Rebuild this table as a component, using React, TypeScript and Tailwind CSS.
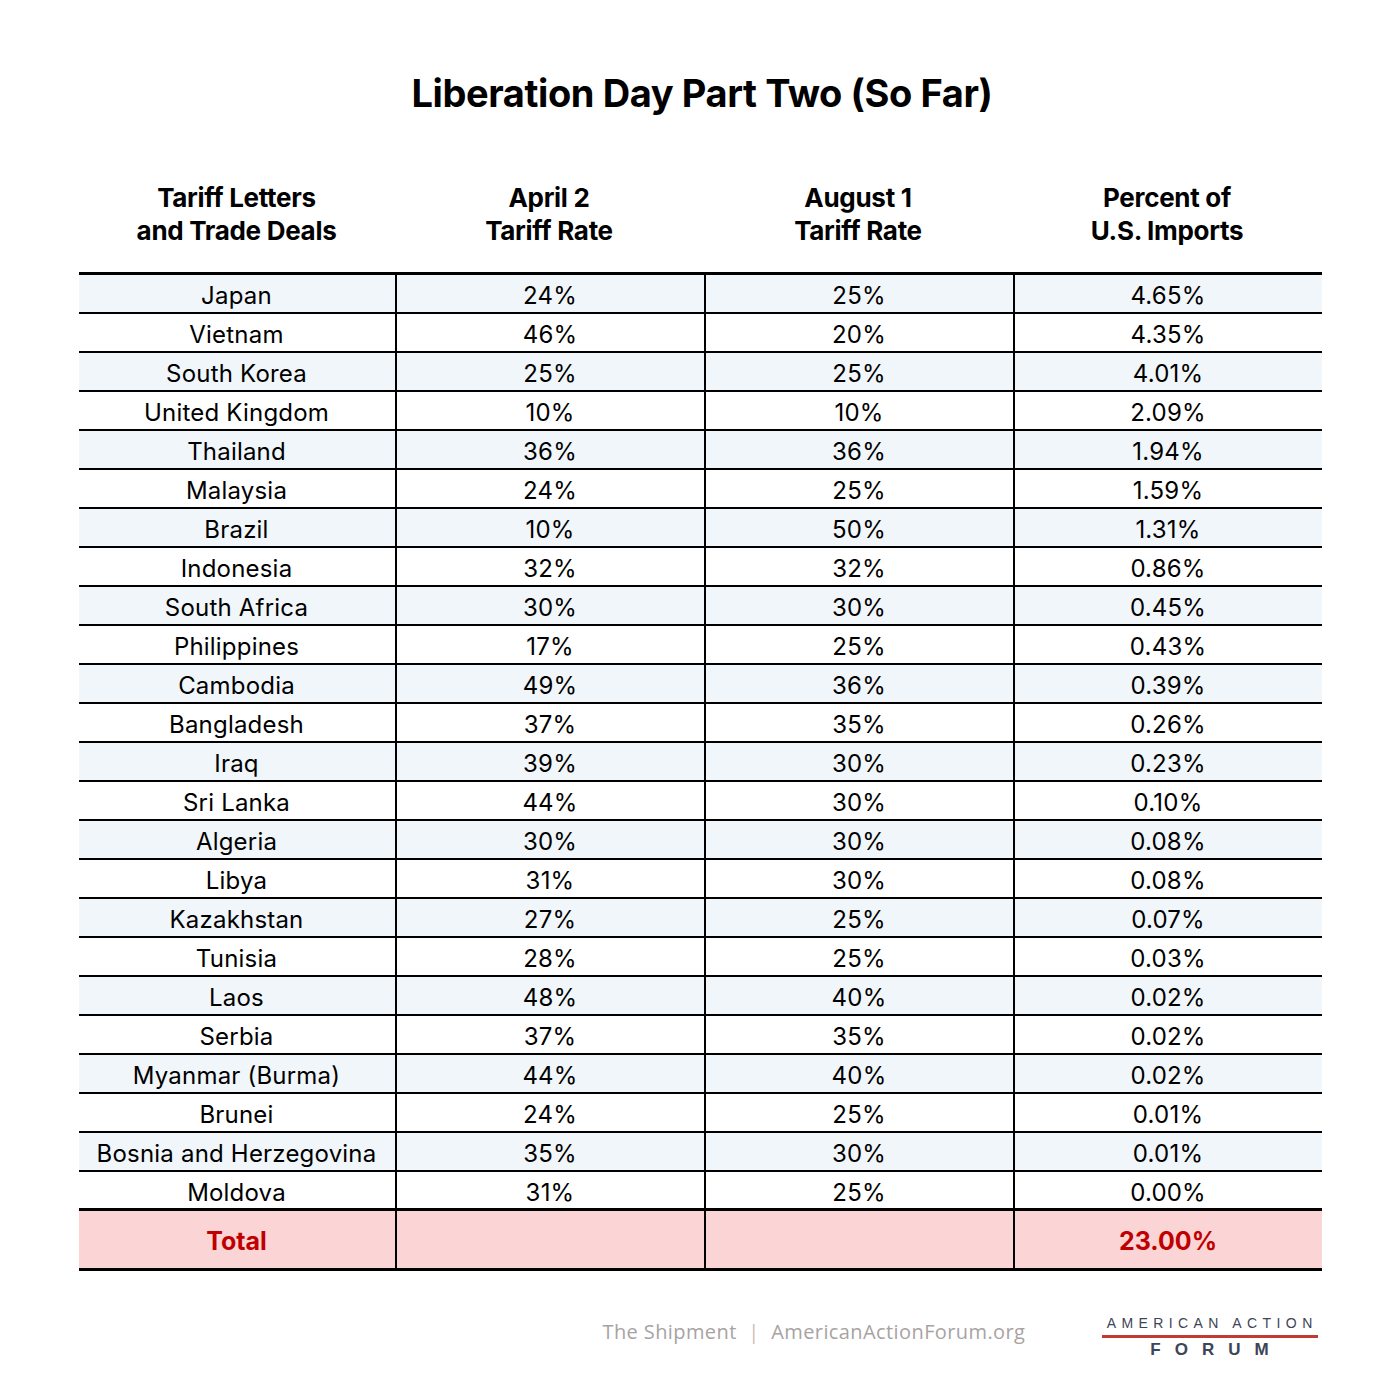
import React from "react";

const rows: [string, string, string, string][] = [
  ["Japan", "24%", "25%", "4.65%"],
  ["Vietnam", "46%", "20%", "4.35%"],
  ["South Korea", "25%", "25%", "4.01%"],
  ["United Kingdom", "10%", "10%", "2.09%"],
  ["Thailand", "36%", "36%", "1.94%"],
  ["Malaysia", "24%", "25%", "1.59%"],
  ["Brazil", "10%", "50%", "1.31%"],
  ["Indonesia", "32%", "32%", "0.86%"],
  ["South Africa", "30%", "30%", "0.45%"],
  ["Philippines", "17%", "25%", "0.43%"],
  ["Cambodia", "49%", "36%", "0.39%"],
  ["Bangladesh", "37%", "35%", "0.26%"],
  ["Iraq", "39%", "30%", "0.23%"],
  ["Sri Lanka", "44%", "30%", "0.10%"],
  ["Algeria", "30%", "30%", "0.08%"],
  ["Libya", "31%", "30%", "0.08%"],
  ["Kazakhstan", "27%", "25%", "0.07%"],
  ["Tunisia", "28%", "25%", "0.03%"],
  ["Laos", "48%", "40%", "0.02%"],
  ["Serbia", "37%", "35%", "0.02%"],
  ["Myanmar (Burma)", "44%", "40%", "0.02%"],
  ["Brunei", "24%", "25%", "0.01%"],
  ["Bosnia and Herzegovina", "35%", "30%", "0.01%"],
  ["Moldova", "31%", "25%", "0.00%"],
];

const grid = "grid grid-cols-[316px_309px_309px_309px]";

export default function App() {
  return (
    <div
      className="w-[1400px] h-[1400px] bg-white text-black flex flex-col items-center"
      style={{ fontFamily: "Inter, 'Noto Sans', sans-serif" }}
    >
      <h1 className="mt-[70px] h-[46px] text-[38px] leading-[46px] font-bold tracking-[-0.4px] pl-[4px]">
        Liberation Day Part Two (So Far)
      </h1>

      <div className="mt-[65px] w-[1243px]">
        <div className={`${grid} text-[26px] leading-[33px] font-bold text-center tracking-[-0.3px]`}>
          <div>Tariff Letters<br />and Trade Deals</div>
          <div>April 2<br />Tariff Rate</div>
          <div>August 1<br />Tariff Rate</div>
          <div>Percent of<br />U.S. Imports</div>
        </div>

        <div className="mt-[25px] border-t-[3px] border-black">
          {rows.map((r, i) => (
            <div
              key={r[0]}
              className={`${grid} h-[39px] text-[24px] leading-[37px] tracking-[0.2px] text-center ${
                i === rows.length - 1 ? "border-b-[3px]" : "border-b-2"
              } border-black ${i % 2 === 0 ? "bg-[#f1f6fb]" : "bg-white"}`}
            >
              <div className="pt-[2px]">{r[0]}</div>
              <div className="border-l-2 border-black pt-[2px]">{r[1]}</div>
              <div className="border-l-2 border-black pt-[2px]">{r[2]}</div>
              <div className="border-l-2 border-black pt-[2px]">{r[3]}</div>
            </div>
          ))}
          <div
            className={`${grid} h-[60px] bg-[#fbd5d6] border-b-[3px] border-black text-[#c00000] font-bold text-[25px] leading-[56px] text-center`}
          >
            <div className="pt-[2px]">Total</div>
            <div className="border-l-2 border-black"></div>
            <div className="border-l-2 border-black"></div>
            <div className="border-l-2 border-black pt-[2px]">23.00%</div>
          </div>
        </div>
      </div>

      <div className="w-[1243px] mt-[29px] flex items-start">
        <div
          className="ml-[524px] mt-[17px] text-[20px] leading-[30px] text-[#a8a3a3] tracking-[0.4px] whitespace-nowrap"
          style={{ fontFamily: "'Open Sans', 'Noto Sans', sans-serif" }}
        >
          The Shipment <span className="mx-[6px] text-[#cdb9b9]">|</span> AmericanActionForum.org
        </div>
        <div
          className="ml-auto mr-[4px] mt-[15px] flex flex-col items-center w-[216px] shrink-0"
          style={{ fontFamily: "'Liberation Sans', Arial, sans-serif" }}
        >
          <div className="text-[14px] leading-[16px] tracking-[5.4px] mr-[-5.4px] text-[#3d4556] whitespace-nowrap">
            AMERICAN ACTION
          </div>
          <div className="w-full h-[3px] bg-[#c23b32] mt-[4px]"></div>
          <div className="text-[17px] leading-[19px] font-black tracking-[14px] mr-[-14px] text-[#3d4556] mt-[2px] whitespace-nowrap">
            FORUM
          </div>
        </div>
      </div>
    </div>
  );
}
